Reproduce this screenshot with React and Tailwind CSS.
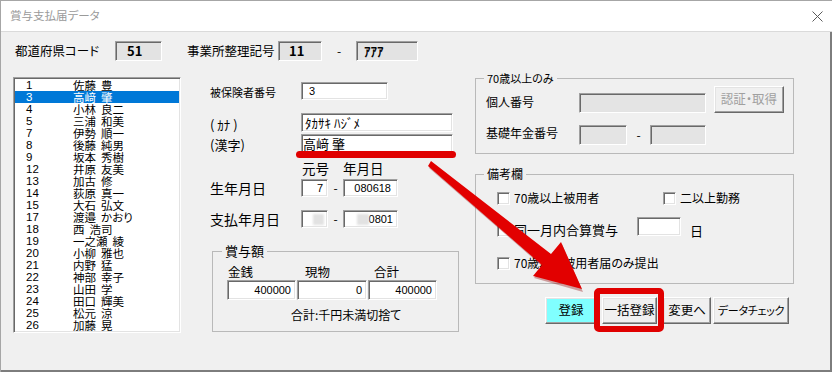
import React from "react";

// 従業員リスト
const people = [
  ["1", "佐藤", "豊"],
  ["3", "高﨑", "肇"],
  ["4", "小林", "良二"],
  ["5", "三浦", "和美"],
  ["7", "伊勢", "順一"],
  ["8", "後藤", "純男"],
  ["9", "坂本", "秀樹"],
  ["12", "井原", "友美"],
  ["13", "加古", "修"],
  ["14", "荻原", "真一"],
  ["15", "大石", "弘文"],
  ["17", "渡邉", "かおり"],
  ["18", "西", "浩司"],
  ["19", "一之瀬", "綾"],
  ["20", "小柳", "雅也"],
  ["21", "内野", "猛"],
  ["22", "神部", "幸子"],
  ["23", "山田", "学"],
  ["24", "田口", "輝美"],
  ["25", "松元", "涼"],
  ["26", "加藤", "晃"],
];

function Sunken({ className = "", children }) {
  return (
    <div
      className={
        "flex items-center border border-t-[#a0a0a0] border-l-[#a0a0a0] border-r-white border-b-white shadow-[inset_1px_1px_0_#696969,inset_-1px_-1px_0_#e3e3e3] " +
        className
      }
    >
      {children}
    </div>
  );
}

function Btn({ className = "", children }) {
  return (
    <div
      className={
        "flex items-center justify-center whitespace-nowrap border border-t-white border-l-white border-r-[#696969] border-b-[#696969] shadow-[inset_-1px_-1px_0_#a0a0a0,inset_1px_1px_0_#e3e3e3] " +
        className
      }
    >
      {children}
    </div>
  );
}

function Check() {
  return (
    <div className="h-[13px] w-[13px] shrink-0 bg-white border border-t-[#a0a0a0] border-l-[#a0a0a0] border-r-white border-b-white shadow-[inset_1px_1px_0_#696969,inset_-1px_-1px_0_#e3e3e3]" />
  );
}

export default function App() {
  return (
    <div className="relative h-[375px] w-[834px] overflow-hidden bg-white text-black font-['Noto_Sans_CJK_JP','Noto_Sans',sans-serif] [font-feature-settings:'palt']">
      <div className="flex h-[372px] w-[832px] flex-col border-l border-t border-[#a6a6a6]">
        {/* タイトルバー */}
        <div className="flex h-[31px] shrink-0 items-center justify-between border-b border-[#dadada] bg-white pl-[9px] pr-[9px]">
          <span className="text-[11.5px] leading-none text-[#9a9a9a]">賞与支払届データ</span>
          <svg width="11" height="11" viewBox="0 0 11 11">
            <path d="M0.5 0.5L10.5 10.5M10.5 0.5L0.5 10.5" stroke="#5a5a5a" strokeWidth="1" fill="none" />
          </svg>
        </div>

        <div className="flex flex-1 flex-col border-b-2 border-r-2 border-[#7d7d7d] bg-[#f0f0f0]">
          {/* 上段 */}
          <div className="mt-[9px] flex h-[20px] items-center">
            <div className="w-[114px] pl-[14px] text-[12.5px] leading-[20px]">都道府県コード</div>
            <Sunken className="h-[20px] w-[47px] bg-[#e3e3e3] pl-[11px] text-[13px] font-bold">51</Sunken>
            <div className="w-[116px] pl-[25px] text-[12.5px] leading-[20px]">事業所整理記号</div>
            <Sunken className="h-[20px] w-[44px] bg-[#e3e3e3] pl-[10px] text-[13px] font-bold">11</Sunken>
            <div className="w-[34px] text-center text-[12px] leading-[20px]">-</div>
            <Sunken className="h-[20px] w-[62px] bg-[#e3e3e3] pl-[7px] text-[13px] font-bold">ｱｱｱ</Sunken>
          </div>

          <div className="mt-[10px] flex items-start pl-[12px]">
            {/* リスト */}
            <div className="mt-[6px] h-[256px] w-[168px] overflow-hidden bg-white border border-t-[#a0a0a0] border-l-[#a0a0a0] border-r-white border-b-white shadow-[inset_1px_1px_0_#696969,inset_-1px_-1px_0_#e3e3e3] p-[1px]">
              {people.map(([no, sei, mei], i) => (
                <div
                  key={no}
                  className={
                    "flex h-[12px] text-[11.5px] leading-[12px] " +
                    (i === 1 ? "bg-[#0078d7] text-white" : "")
                  }
                >
                  <span className="w-[58px] pl-[11px] font-['Liberation_Sans',sans-serif]">{no}</span>
                  <span>{sei}</span>
                  <span className="ml-[5px]">{mei}</span>
                </div>
              ))}
            </div>

            {/* 中央 */}
            <div className="ml-[29px] flex w-[250px] flex-col">
              <div className="mt-[11px] flex h-[18px]">
                <div className="w-[91px] text-[11px] leading-[20px]">被保険者番号</div>
                <Sunken className="h-[18px] w-[87px] bg-white pl-[7px] text-[11px] font-['Liberation_Sans',sans-serif]">3</Sunken>
              </div>
              <div className="mt-[13px] flex h-[19px]">
                <div className="w-[91px] pt-[4px] text-[13px] leading-[16px]">( ｶﾅ )</div>
                <Sunken className="h-[19px] w-[152px] bg-white pl-[3px] text-[13px]">ﾀｶｻｷ ﾊｼﾞﾒ</Sunken>
              </div>
              <div className="mt-[2px] flex h-[19px]">
                <div className="w-[91px] pt-[3px] text-[13px] leading-[16px]">(漢字)</div>
                <Sunken className="h-[19px] w-[152px] bg-white pl-[1px] text-[13px]">高﨑 肇</Sunken>
              </div>
              <div className="mt-[7px] flex h-[16px] pl-[92px] text-[13.5px] leading-[16px]">
                <span className="w-[41px]">元号</span>
                <span>年月日</span>
              </div>
              <div className="mt-[3px] flex h-[18px]">
                <div className="w-[91px] text-[14px] leading-[18px]">生年月日</div>
                <Sunken className="h-[18px] w-[27px] justify-end bg-white pr-[4px] text-[11px] font-['Liberation_Sans',sans-serif]">7</Sunken>
                <div className="w-[15px] text-center text-[12px] leading-[18px]">-</div>
                <Sunken className="h-[18px] w-[55px] justify-end bg-white pr-[6px] text-[11px] font-['Liberation_Sans',sans-serif]">080618</Sunken>
              </div>
              <div className="mt-[13px] flex h-[18px]">
                <div className="w-[91px] text-[14px] leading-[18px]">支払年月日</div>
                <Sunken className="h-[18px] w-[27px] justify-end bg-white pr-[3px]">
                  <div className="h-[11px] w-[11px] bg-[#e2e2e2] blur-[1px]" />
                </Sunken>
                <div className="w-[15px] text-center text-[12px] leading-[18px]">-</div>
                <Sunken className="h-[18px] w-[55px] justify-end bg-white pr-[4px] text-[11px] font-['Liberation_Sans',sans-serif]">
                  <div className="h-[11px] w-[12px] bg-[#e2e2e2] blur-[1px]" />
                  <span>0801</span>
                </Sunken>
              </div>

              <fieldset className="ml-[2px] mt-[16px] w-[247px] border border-[#b9b9b9] pb-[8px]">
                <legend className="ml-[9px] px-[3px] text-[13px] leading-[14px]">賞与額</legend>
                <div className="mt-[6px] flex h-[16px] pl-[15px] text-[12.5px] leading-[16px]">
                  <span className="w-[77px]">金銭</span>
                  <span className="w-[69px]">現物</span>
                  <span>合計</span>
                </div>
                <div className="flex gap-[1px] pl-[14px] text-[11px] font-['Liberation_Sans',sans-serif]">
                  <Sunken className="h-[20px] w-[69px] justify-end bg-white pr-[4px]">400000</Sunken>
                  <Sunken className="h-[20px] w-[70px] justify-end bg-white pr-[4px]">0</Sunken>
                  <Sunken className="h-[20px] w-[69px] justify-end bg-white pr-[4px]">400000</Sunken>
                </div>
                <div className="mt-[7px] pl-[78px] text-[12px] leading-[16px]">合計:千円未満切捨て</div>
              </fieldset>
            </div>

            {/* 右側 */}
            <div className="ml-[15px] flex w-[319px] flex-col">
              <fieldset className="w-[319px] border border-[#b9b9b9] pb-[8px]">
                <legend className="ml-[8px] px-[3px] text-[11px] leading-[14px]">70歳以上のみ</legend>
                <div className="mt-[1px] flex h-[27px] items-start">
                  <div className="mt-[8px] w-[103px] pl-[10px] text-[12px] leading-[16px]">個人番号</div>
                  <Sunken className="mt-[7px] h-[20px] w-[127px] bg-[#e4e4e4]" />
                  <Btn className="ml-[8px] h-[27px] w-[70px] text-[12.5px] text-[#a0a0a0]">認証・取得</Btn>
                </div>
                <div className="mt-[12px] flex h-[20px] items-start">
                  <div className="w-[103px] pl-[10px] text-[12px] leading-[16px]">基礎年金番号</div>
                  <Sunken className="h-[20px] w-[48px] bg-[#e4e4e4]" />
                  <div className="w-[23px] text-center text-[12px] leading-[20px]">-</div>
                  <Sunken className="h-[20px] w-[56px] bg-[#e4e4e4]" />
                </div>
              </fieldset>

              <fieldset className="mt-[13px] w-[319px] border border-[#b9b9b9] pb-[10px]">
                <legend className="ml-[8px] px-[3px] text-[12px] leading-[14px]">備考欄</legend>
                <div className="mt-[7px] flex h-[20px] items-center pl-[21px] text-[12px]">
                  <div className="flex w-[166px] items-center">
                    <Check />
                    <span className="ml-[4px]">70歳以上被用者</span>
                  </div>
                  <div className="flex items-center">
                    <Check />
                    <span className="ml-[4px]">二以上勤務</span>
                  </div>
                </div>
                <div className="mt-[9px] flex h-[20px] items-start pl-[21px] text-[12px]">
                  <div className="flex w-[140px] items-start">
                    <div className="mt-[7px]">
                      <Check />
                    </div>
                    <span className="ml-[4px] mt-[5px] text-[13px] leading-[16px]">同一月内合算賞与</span>
                  </div>
                  <Sunken className="h-[19px] w-[44px] bg-white" />
                  <span className="ml-[9px] mt-[6px] text-[13px] leading-[16px]">日</span>
                </div>
                <div className="mt-[16px] flex h-[20px] items-center pl-[21px] text-[12px]">
                  <Check />
                  <span className="ml-[4px]">70歳以上被用者届のみ提出</span>
                </div>
              </fieldset>

              <div className="mt-[13px] flex h-[27px] pl-[70px] text-[12.5px]">
                <Btn className="h-[27px] w-[52px] bg-[#80ffff]">登録</Btn>
                <Btn className="ml-[5px] h-[27px] w-[55px] bg-[#f0f0f0]">一括登録</Btn>
                <Btn className="ml-[6px] h-[27px] w-[48px] bg-[#f0f0f0]">変更へ</Btn>
                <Btn className="ml-[2px] h-[27px] w-[76px] bg-[#f0f0f0] text-[11px] tracking-[-0.3px]">データチェック</Btn>
              </div>
            </div>
          </div>
        </div>
      </div>

      {/* 赤い注釈 */}
      <div className="absolute left-[296px] top-[151px] h-[7px] w-[160px] rounded-full bg-[#e00000]" />
      <div className="absolute left-[594px] top-[288px] h-[44px] w-[70px] rounded-[5px] border-[6px] border-[#e00000]" />
      <svg className="pointer-events-none absolute left-0 top-0" width="834" height="375" viewBox="0 0 834 375">
        <polygon
          points="431,162 551,254 561,242 582,290 533,276 542,265 428,166"
          fill="#900000"
          opacity="0.35"
          transform="translate(1 2)"
        />
        <polygon points="431,161 551,254 561,242 582,289 533,276 542,265 428,166" fill="#e20000" />
      </svg>
    </div>
  );
}
